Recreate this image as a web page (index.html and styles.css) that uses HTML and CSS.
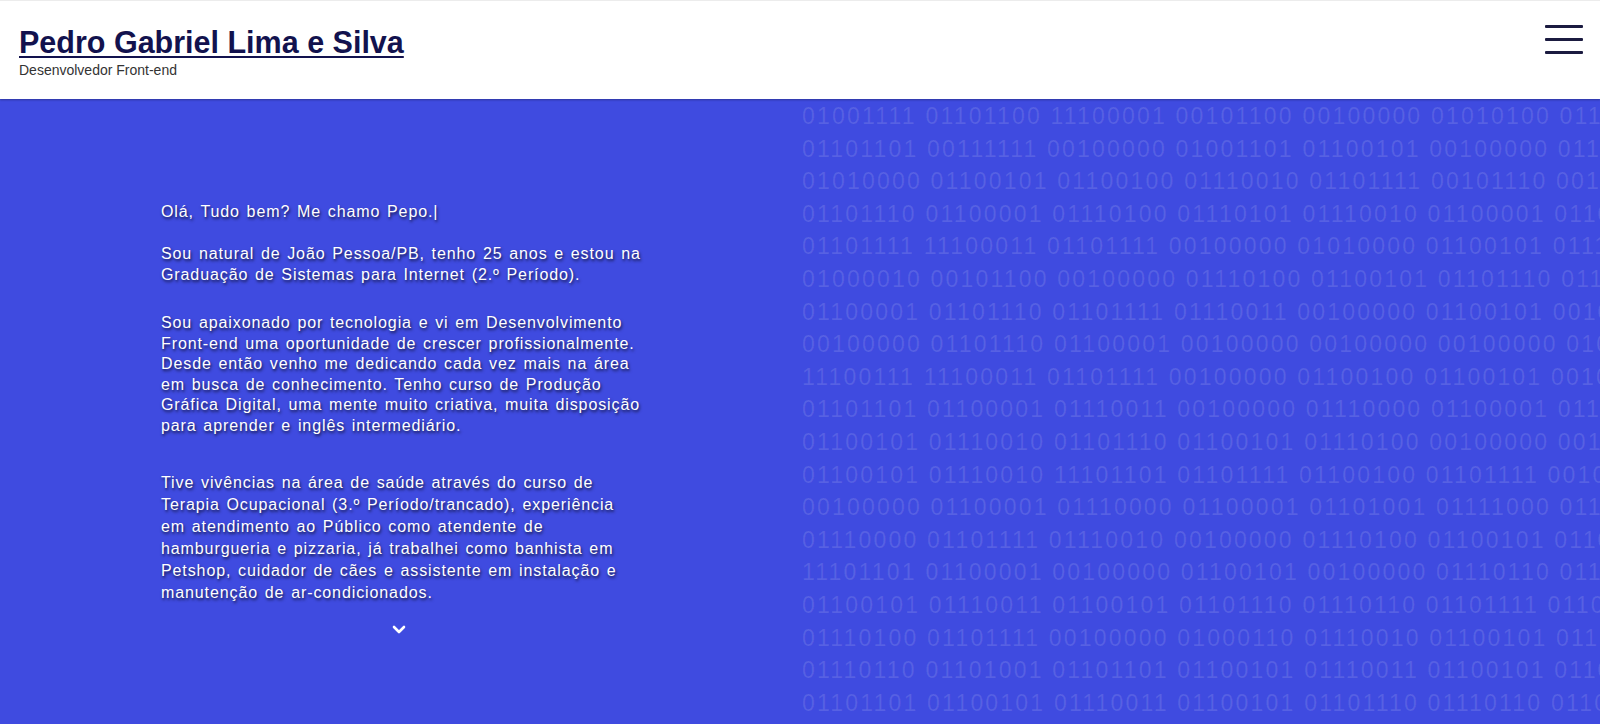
FILE: index.html
```html
<!DOCTYPE html>
<html lang="pt-BR">
<head>
<meta charset="utf-8">
<title>Pedro Gabriel Lima e Silva</title>
<link rel="stylesheet" href="styles.css">
</head>
<body>
<header class="site-header">
  <div class="brand">
    <a class="brand-name" href="#">Pedro Gabriel Lima e Silva</a>
    <p class="brand-role">Desenvolvedor Front-end</p>
  </div>
  <button class="menu-btn" aria-label="Menu">
    <span class="menu-line"></span>
    <span class="menu-line"></span>
    <span class="menu-line"></span>
  </button>
</header>
<main class="hero">
  <section class="about">
    <div class="about-text">
      <p class="p1">Olá, Tudo bem? Me chamo Pepo.<span class="cursor">|</span></p>
      <p class="p2">Sou natural de João Pessoa/PB, tenho 25 anos e estou na<br>Graduação de Sistemas para Internet (2.º Período).</p>
      <p class="p3">Sou apaixonado por tecnologia e vi em Desenvolvimento<br>Front-end uma oportunidade de crescer profissionalmente.<br>Desde então venho me dedicando cada vez mais na área<br>em busca de conhecimento. Tenho curso de Produção<br>Gráfica Digital, uma mente muito criativa, muita disposição<br>para aprender e inglês intermediário.</p>
      <p class="p4">Tive vivências na área de saúde através do curso de<br>Terapia Ocupacional (3.º Período/trancado), experiência<br>em atendimento ao Público como atendente de<br>hamburgueria e pizzaria, já trabalhei como banhista em<br>Petshop, cuidador de cães e assistente em instalação e<br>manutenção de ar-condicionados.</p>
      <div class="scroll-down">
        <svg width="14" height="9" viewBox="0 0 14 9"><path d="M2 2l5 5 5-5" fill="none" stroke="#fff" stroke-width="2.6" stroke-linecap="round" stroke-linejoin="round"/></svg>
      </div>
    </div>
  </section>
  <section class="binary" aria-hidden="true">
    <div class="bin-row">01001111 01101100 11100001 00101100 00100000 01010100 01110101</div>
    <div class="bin-row">01101101 00111111 00100000 01001101 01100101 00100000 01100011</div>
    <div class="bin-row">01010000 01100101 01100100 01110010 01101111 00101110 00100000</div>
    <div class="bin-row">01101110 01100001 01110100 01110101 01110010 01100001 01101100</div>
    <div class="bin-row">01101111 11100011 01101111 00100000 01010000 01100101 01110011</div>
    <div class="bin-row">01000010 00101100 00100000 01110100 01100101 01101110 01101000</div>
    <div class="bin-row">01100001 01101110 01101111 01110011 00100000 01100101 00100000</div>
    <div class="bin-row">00100000 01101110 01100001 00100000 00100000 00100000 01000111</div>
    <div class="bin-row">11100111 11100011 01101111 00100000 01100100 01100101 00100000</div>
    <div class="bin-row">01101101 01100001 01110011 00100000 01110000 01100001 01110010</div>
    <div class="bin-row">01100101 01110010 01101110 01100101 01110100 00100000 00101000</div>
    <div class="bin-row">01100101 01110010 11101101 01101111 01100100 01101111 00101001</div>
    <div class="bin-row">00100000 01100001 01110000 01100001 01101001 01111000 01101111</div>
    <div class="bin-row">01110000 01101111 01110010 00100000 01110100 01100101 01100011</div>
    <div class="bin-row">11101101 01100001 00100000 01100101 00100000 01110110 01101001</div>
    <div class="bin-row">01100101 01110011 01100101 01101110 01110110 01101111 01101100</div>
    <div class="bin-row">01110100 01101111 00100000 01000110 01110010 01100101 01101110</div>
    <div class="bin-row">01110110 01101001 01101101 01100101 01110011 01100101 01101110</div>
    <div class="bin-row">01101101 01100101 01110011 01100101 01101110 01110110 01101111</div>
  </section>
</main>
</body>
</html>
```
FILE: styles.css
```css
* { box-sizing: border-box; }

html, body {
  margin: 0;
  padding: 0;
  height: 100%;
}

body {
  font-family: "Liberation Sans", Arial, sans-serif;
  background: #3f4be0;
  overflow: hidden;
  display: flex;
  flex-direction: column;
}

.site-header {
  flex: 0 0 99px;
  height: 99px;
  background: #ffffff;
  display: flex;
  align-items: center;
  justify-content: space-between;
  padding: 0 17px 0 19px;
  border-top: 1px solid #ececec;
  box-shadow: 0 1px 2px rgba(0, 0, 0, 0.3);
  position: relative;
  z-index: 2;
}

.brand {
  display: flex;
  flex-direction: column;
  padding-top: 3px;
}

.brand-name {
  font-size: 30.5px;
  font-weight: bold;
  line-height: 34px;
  color: #12124e;
  text-decoration: underline;
  text-decoration-thickness: 2px;
  text-underline-offset: 3px;
}

.brand-role {
  margin: 3px 0 0;
  font-size: 14px;
  line-height: 16px;
  color: #333333;
}

.menu-btn {
  align-self: flex-start;
  margin-top: 24px;
  width: 38px;
  padding: 0;
  border: 0;
  background: transparent;
  display: flex;
  flex-direction: column;
  gap: 10px;
  cursor: pointer;
}

.menu-line {
  display: block;
  height: 3px;
  width: 38px;
  background: #1b1b40;
  border-radius: 1px;
}

.hero {
  flex: 1;
  display: grid;
  grid-template-columns: 800px 800px;
  min-height: 0;
}

.about {
  padding: 102px 0 0 161px;
}

.about-text {
  width: 520px;
  color: #ffffff;
  font-size: 16px;
  line-height: 21.2px;
  letter-spacing: 0.9px;
  word-spacing: 1.4px;
  white-space: nowrap;
  text-shadow: 1px 2px 3px rgba(0, 0, 0, 0.7);
}

.about-text p {
  margin: 0;
}

.about-text .p2 {
  margin-top: 22px;
  line-height: 20.4px;
}

.about-text .p3 {
  margin-top: 28px;
  line-height: 20.6px;
}

.about-text .p4 {
  margin-top: 35px;
  line-height: 22px;
}

.scroll-down {
  width: 476px;
  display: flex;
  justify-content: center;
  margin-top: 21px;
}

.binary {
  overflow: hidden;
  padding-top: 1px;
  padding-left: 2px;
}

.bin-row {
  white-space: nowrap;
  font-size: 23px;
  line-height: 32.6px;
  letter-spacing: 2.2px;
  color: rgba(255, 255, 255, 0.12);
  overflow: hidden;
}
```
